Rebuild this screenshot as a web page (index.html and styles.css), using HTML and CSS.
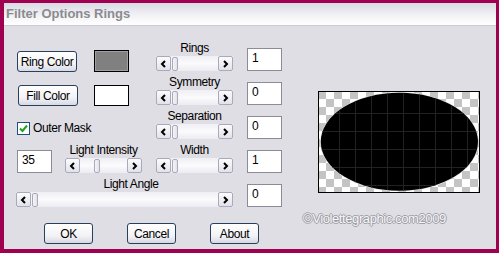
FILE: index.html
```html
<!DOCTYPE html>
<html lang="en">
<head>
    <meta charset="UTF-8">
    <title>Filter Options Rings</title>
    <link rel="stylesheet" href="styles.css">
</head>
<body>
    <div class="window">
        <div class="titlebar">Filter Options Rings</div>
        <div class="body">
            <div class="left">
                <div class="controls">
                    <!-- row 1 -->
                    <button class="btn btn-color span-2">Ring Color</button>
                    <div class="swatch swatch-grey col-3"></div>
                    <div class="slider col-4">
                        <div class="label">Rings</div>
                        <div class="scroll">
                            <span class="arrow"><svg width="7" height="8" viewBox="0 0 7 8"><path d="M5 1 L2 4 L5 7" fill="none" stroke="#000" stroke-width="2"/></svg></span>
                            <span class="thumb"></span>
                            <span class="track"></span>
                            <span class="arrow"><svg width="7" height="8" viewBox="0 0 7 8"><path d="M2 1 L5 4 L2 7" fill="none" stroke="#000" stroke-width="2"/></svg></span>
                        </div>
                    </div>
                    <div class="field col-6">1</div>

                    <!-- row 2 -->
                    <button class="btn btn-color btn-fill span-2">Fill Color</button>
                    <div class="swatch swatch-white col-3"></div>
                    <div class="slider col-4">
                        <div class="label">Symmetry</div>
                        <div class="scroll">
                            <span class="arrow"><svg width="7" height="8" viewBox="0 0 7 8"><path d="M5 1 L2 4 L5 7" fill="none" stroke="#000" stroke-width="2"/></svg></span>
                            <span class="thumb"></span>
                            <span class="track"></span>
                            <span class="arrow"><svg width="7" height="8" viewBox="0 0 7 8"><path d="M2 1 L5 4 L2 7" fill="none" stroke="#000" stroke-width="2"/></svg></span>
                        </div>
                    </div>
                    <div class="field col-6">0</div>

                    <!-- row 3 -->
                    <label class="check span-3">
                        <span class="box"><svg width="11" height="11" viewBox="0 0 11 11"><path d="M2 5.5 L4.5 8 L9 2.5" fill="none" stroke="#21a121" stroke-width="2"/></svg></span>
                        Outer Mask
                    </label>
                    <div class="slider col-4">
                        <div class="label">Separation</div>
                        <div class="scroll">
                            <span class="arrow"><svg width="7" height="8" viewBox="0 0 7 8"><path d="M5 1 L2 4 L5 7" fill="none" stroke="#000" stroke-width="2"/></svg></span>
                            <span class="thumb"></span>
                            <span class="track"></span>
                            <span class="arrow"><svg width="7" height="8" viewBox="0 0 7 8"><path d="M2 1 L5 4 L2 7" fill="none" stroke="#000" stroke-width="2"/></svg></span>
                        </div>
                    </div>
                    <div class="field col-6">0</div>

                    <!-- row 4 -->
                    <div class="field field-first col-1">35</div>
                    <div class="slider span-23">
                        <div class="label">Light Intensity</div>
                        <div class="scroll">
                            <span class="arrow"><svg width="7" height="8" viewBox="0 0 7 8"><path d="M5 1 L2 4 L5 7" fill="none" stroke="#000" stroke-width="2"/></svg></span>
                            <span class="thumb" style="margin-left: 14px"></span>
                            <span class="track"></span>
                            <span class="arrow"><svg width="7" height="8" viewBox="0 0 7 8"><path d="M2 1 L5 4 L2 7" fill="none" stroke="#000" stroke-width="2"/></svg></span>
                        </div>
                    </div>
                    <div class="slider col-4">
                        <div class="label">Width</div>
                        <div class="scroll">
                            <span class="arrow"><svg width="7" height="8" viewBox="0 0 7 8"><path d="M5 1 L2 4 L5 7" fill="none" stroke="#000" stroke-width="2"/></svg></span>
                            <span class="thumb"></span>
                            <span class="track"></span>
                            <span class="arrow"><svg width="7" height="8" viewBox="0 0 7 8"><path d="M2 1 L5 4 L2 7" fill="none" stroke="#000" stroke-width="2"/></svg></span>
                        </div>
                    </div>
                    <div class="field col-6">1</div>

                    <!-- row 5 -->
                    <div class="slider slider-long span-4">
                        <div class="label label-angle">Light Angle</div>
                        <div class="scroll">
                            <span class="arrow"><svg width="7" height="8" viewBox="0 0 7 8"><path d="M5 1 L2 4 L5 7" fill="none" stroke="#000" stroke-width="2"/></svg></span>
                            <span class="thumb"></span>
                            <span class="track"></span>
                            <span class="arrow"><svg width="7" height="8" viewBox="0 0 7 8"><path d="M2 1 L5 4 L2 7" fill="none" stroke="#000" stroke-width="2"/></svg></span>
                        </div>
                    </div>
                    <div class="field col-6">0</div>
                </div>

                <div class="footer">
                    <button class="btn btn-action">OK</button>
                    <button class="btn btn-action">Cancel</button>
                    <button class="btn btn-action">About</button>
                </div>
            </div>

            <div class="right">
                <div class="preview">
                    <svg width="162" height="102" viewBox="0 0 162 102">
                        <defs>
                            <pattern id="checker" width="16" height="16" patternUnits="userSpaceOnUse">
                                <rect width="16" height="16" fill="#fff"/>
                                <rect width="8" height="8" fill="#c4c4c4"/>
                                <rect x="8" y="8" width="8" height="8" fill="#c4c4c4"/>
                            </pattern>
                            <clipPath id="ring">
                                <ellipse cx="81.4" cy="50.7" rx="78.6" ry="49"/>
                            </clipPath>
                        </defs>
                        <rect width="162" height="102" fill="url(#checker)"/>
                        <ellipse cx="81.4" cy="50.7" rx="79.2" ry="49.6" fill="#e8e8e8"/>
                        <ellipse cx="81.4" cy="50.7" rx="78.6" ry="49" fill="#000"/>
                        <g clip-path="url(#ring)" stroke="#222" stroke-width="1">
                            <path d="M21.5 0V102M37.5 0V102M53.5 0V102M69.5 0V102M85.5 0V102M101.5 0V102M117.5 0V102M133.5 0V102M149.5 0V102"/>
                            <path d="M0 22.5H162M0 40.5H162M0 58.5H162M0 76.5H162M0 94.5H162"/>
                        </g>
                        <rect x="0.5" y="0.5" width="161" height="101" fill="none" stroke="#000"/>
                    </svg>
                </div>
                <div class="copyright">©Violettegraphic.com2009</div>
            </div>
        </div>
    </div>
</body>
</html>
```

FILE: styles.css
```css
body {
    margin: 0;
    font-family: "Liberation Sans", Arial, sans-serif;
}
.window {
    width: 499px;
    height: 253px;
    box-sizing: border-box;
    border-style: solid;
    border-color: #a00050;
    border-width: 3px 3px 4px 4px;
    background-color: #dfdee4;
}
.titlebar {
    height: 22px;
    line-height: 22px;
    padding-left: 2px;
    font-size: 13px;
    font-weight: bold;
    color: #8b8b8f;
    background: linear-gradient(#d9d9e3, #f2f2f6 55%, #ffffff);
    border-bottom: 1px solid #cacad8;
}
.body {
    display: flex;
}
.left {
    width: 266px;
    padding-left: 12px;
}
.controls {
    margin-top: 15px;
    display: grid;
    grid-template-columns: 49px 29px 62px 77px 14px 35px;
    grid-auto-rows: 30px;
    row-gap: 4px;
    align-items: end;
    font-size: 12px;
    letter-spacing: -0.4px;
}
.col-1 { grid-column: 1; }
.col-3 { grid-column: 3; }
.col-4 { grid-column: 4; }
.col-6 { grid-column: 6; }
.span-2 { grid-column: 1 / 3; }
.span-3 { grid-column: 1 / 4; }
.span-23 { grid-column: 2 / 4; }
.span-4 { grid-column: 1 / 5; }

.btn {
    font-family: "Liberation Sans", Arial, sans-serif;
    font-size: 12px;
    letter-spacing: -0.4px;
    color: #000;
    height: 21px;
    padding: 0;
    border: 1px solid #27405e;
    border-radius: 3px;
    background: linear-gradient(#ffffff, #f3f3f7 60%, #d9d9e3);
}
.btn-color {
    width: 60px;
    margin-left: 1px;
    margin-bottom: -1px;
    justify-self: start;
}
.btn-fill {
    margin-left: 2px;
}
.swatch {
    width: 35px;
    height: 22px;
    box-sizing: border-box;
    border: 1px solid #000;
    margin-bottom: -1px;
}
.swatch-grey {
    background-color: #808080;
    box-shadow: inset 0 0 0 1px #a0a0a0;
}
.swatch-white {
    height: 21px;
    background-color: #fff;
}
.slider {
    width: 77px;
    display: flex;
    flex-direction: column;
    gap: 1px;
}
.slider-long {
    width: 217px;
}
.label {
    height: 14px;
    line-height: 14px;
    text-align: center;
    color: #000;
}
.label-angle {
    padding-left: 13px;
}
.scroll {
    display: flex;
    height: 15px;
    background: linear-gradient(#efeff4, #fbfbfd 50%, #ebebf1);
}
.arrow {
    width: 15px;
    height: 15px;
    box-sizing: border-box;
    border: 1px solid #a9a9ba;
    border-radius: 2px;
    background: linear-gradient(#fcfcfe, #e2e2ea);
    display: flex;
    align-items: center;
    justify-content: center;
}
.thumb {
    width: 6px;
    height: 14px;
    margin-top: 1px;
    margin-left: 1px;
    box-sizing: border-box;
    border: 1px solid #a9a9ba;
    border-radius: 2px;
    background: linear-gradient(90deg, #f4f4f8, #e2e2ea);
}
.track {
    flex: 1;
}
.field {
    width: 35px;
    height: 23px;
    box-sizing: border-box;
    border: 1px solid #8c8c98;
    background-color: #fff;
    padding: 2px 0 0 4px;
    line-height: 14px;
    color: #000;
}
.field-first {
    margin-left: 1px;
}
.check {
    display: flex;
    align-items: center;
    gap: 3px;
    margin-left: 1px;
    margin-bottom: 4px;
    color: #000;
}
.box {
    width: 13px;
    height: 13px;
    box-sizing: border-box;
    border: 1px solid #1c5180;
    background-color: #fff;
    display: flex;
    align-items: center;
    justify-content: center;
}
.footer {
    margin-top: 16px;
    margin-left: 28px;
    display: flex;
    gap: 34px;
}
.btn-action {
    width: 49px;
}
.right {
    margin-left: 21px;
}
.preview {
    margin-top: 65px;
    margin-left: 15px;
    height: 102px;
}
.preview svg {
    display: block;
}
.copyright {
    margin-top: 18px;
    font-size: 13px;
    letter-spacing: -0.4px;
    line-height: 15px;
    color: #f7f7f9;
    text-shadow: 1px 0 #9d9da5, -1px 0 #9d9da5, 0 1px #9d9da5, 0 -1px #9d9da5;
}
```
